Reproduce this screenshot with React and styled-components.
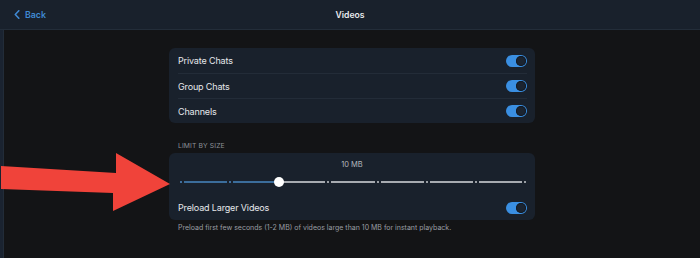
import React from 'react'
import styled, {createGlobalStyle} from 'styled-components'

const GlobalStyle = createGlobalStyle`
  html, body {
    margin: 0;
    padding: 0;
    background: #131416;
    font-family: Inter, "Noto Sans", sans-serif;
    -webkit-font-smoothing: antialiased;
  }
`

const chats = ['Private Chats', 'Group Chats', 'Channels']
const STOPS = 8
const VALUE = 2

function Toggle({on = true}) {
  return (
    <Track $on={on}>
      <Knob />
    </Track>
  )
}

function SizeSlider() {
  const parts = []
  for (let i = 0; i < STOPS; i++) {
    if (i > 0) parts.push(<Segment key={'s' + i} $active={i <= VALUE} />)
    parts.push(
      i === VALUE
        ? <Thumb key={'d' + i} />
        : <Stop key={'d' + i}><Dot $active={i < VALUE} /></Stop>
    )
  }
  return <SliderRow>{parts}</SliderRow>
}

export default function App() {
  return (
    <Screen>
      <GlobalStyle />
      <Header>
        <BackButton>
          <svg width="6" height="9" viewBox="0 0 6 9">
            <path d="M4.8 0.8 L1.3 4.5 L4.8 8.2" fill="none" stroke="currentColor" strokeWidth="1.6" strokeLinecap="round" strokeLinejoin="round" />
          </svg>
          Back
        </BackButton>
        <Title>Videos</Title>
      </Header>
      <Body>
        <Sidebar />
        <Content>
          <Column>
            <Panel>
              {chats.map(name => (
                <Row key={name}>
                  <Label>{name}</Label>
                  <Toggle />
                </Row>
              ))}
            </Panel>
            <SectionTitle>Limit by size</SectionTitle>
            <Panel>
              <SizeValue>10 MB</SizeValue>
              <SizeSlider />
              <Row>
                <Label>Preload Larger Videos</Label>
                <Toggle />
              </Row>
            </Panel>
            <Footnote>Preload first few seconds (1-2 MB) of videos large than 10 MB for instant playback.</Footnote>
          </Column>
          <Arrow width="172" height="62" viewBox="0 0 172 62">
            <polygon points="0,13 115,20 115,0 169,31 112,58 112,40 0,36" fill="#f0433a" />
          </Arrow>
        </Content>
      </Body>
    </Screen>
  )
}

const Screen = styled.div`
  width: 700px;
  height: 258px;
  display: flex;
  flex-direction: column;
  overflow: hidden;
`

const Header = styled.div`
  height: 29px;
  flex-shrink: 0;
  background: #19212c;
  border-bottom: 1px solid #232d39;
  display: flex;
  align-items: center;
  position: relative;
`

const BackButton = styled.div`
  display: flex;
  align-items: center;
  gap: 5px;
  padding-left: 14px;
  color: #3f89d3;
  font-size: 8.8px;
  font-weight: 600;
`

const Title = styled.div`
  position: absolute;
  left: 0;
  right: 0;
  text-align: center;
  color: #e9ebee;
  font-size: 8.6px;
  font-weight: 600;
  pointer-events: none;
`

const Body = styled.div`
  flex: 1;
  display: flex;
`

const Sidebar = styled.div`
  width: 3px;
  background: #1a2330;
  border-right: 1px solid #222c38;
`

const Content = styled.div`
  flex: 1;
  position: relative;
  display: flex;
  justify-content: center;
  padding-top: 18px;
`

const Column = styled.div`
  width: 366px;
  display: flex;
  flex-direction: column;
`

const Panel = styled.div`
  background: #19212c;
  border-radius: 6px;
  display: flex;
  flex-direction: column;
`

const Row = styled.div`
  height: 25px;
  box-sizing: border-box;
  margin: 0 8px 0 9px;
  display: flex;
  align-items: center;
  justify-content: space-between;
  & + & {
    border-top: 1px solid #232c38;
  }
`

const Label = styled.span`
  color: #e6e8eb;
  font-size: 9px;
  letter-spacing: -0.15px;
`

const Track = styled.div`
  width: 21px;
  height: 12px;
  border-radius: 6px;
  background: ${p => (p.$on ? '#3a8fe2' : '#3a3f46')};
  display: flex;
  align-items: center;
  justify-content: ${p => (p.$on ? 'flex-end' : 'flex-start')};
  padding: 0 1px;
  box-sizing: border-box;
`

const Knob = styled.div`
  width: 10px;
  height: 10px;
  border-radius: 50%;
  background: #1b2430;
  box-shadow: inset 0 0 0 1px #131a24;
`

const SectionTitle = styled.div`
  margin: 18px 0 2px 9px;
  line-height: 10px;
  font-size: 6.8px;
  text-transform: uppercase;
  letter-spacing: 0.1px;
  color: #8b9098;
`

const SizeValue = styled.div`
  padding-top: 7px;
  line-height: 10px;
  text-align: center;
  font-size: 7.5px;
  color: #b3b7bd;
`

const SliderRow = styled.div`
  height: 10px;
  margin-top: 7px;
  margin-bottom: 8px;
  padding: 0 7px 0 9px;
  display: flex;
  align-items: center;
`

const Stop = styled.div`
  width: 6px;
  display: flex;
  justify-content: center;
`

const Dot = styled.div`
  width: 2px;
  height: 2px;
  border-radius: 1px;
  background: ${p => (p.$active ? '#4c88c2' : '#c5c8cd')};
`

const Segment = styled.div`
  flex: 1;
  height: 1.5px;
  background: ${p => (p.$active ? '#3b6d9b' : '#a7abb1')};
`

const Thumb = styled.div`
  width: 10px;
  height: 10px;
  margin: 0 -2px;
  border-radius: 50%;
  background: #fff;
  position: relative;
  z-index: 1;
`

const Footnote = styled.div`
  margin: 3px 0 0 9px;
  line-height: 10px;
  font-size: 7px;
  color: #9a9ea4;
`

const Arrow = styled.svg`
  position: absolute;
  left: -3px;
  top: 123px;
`
